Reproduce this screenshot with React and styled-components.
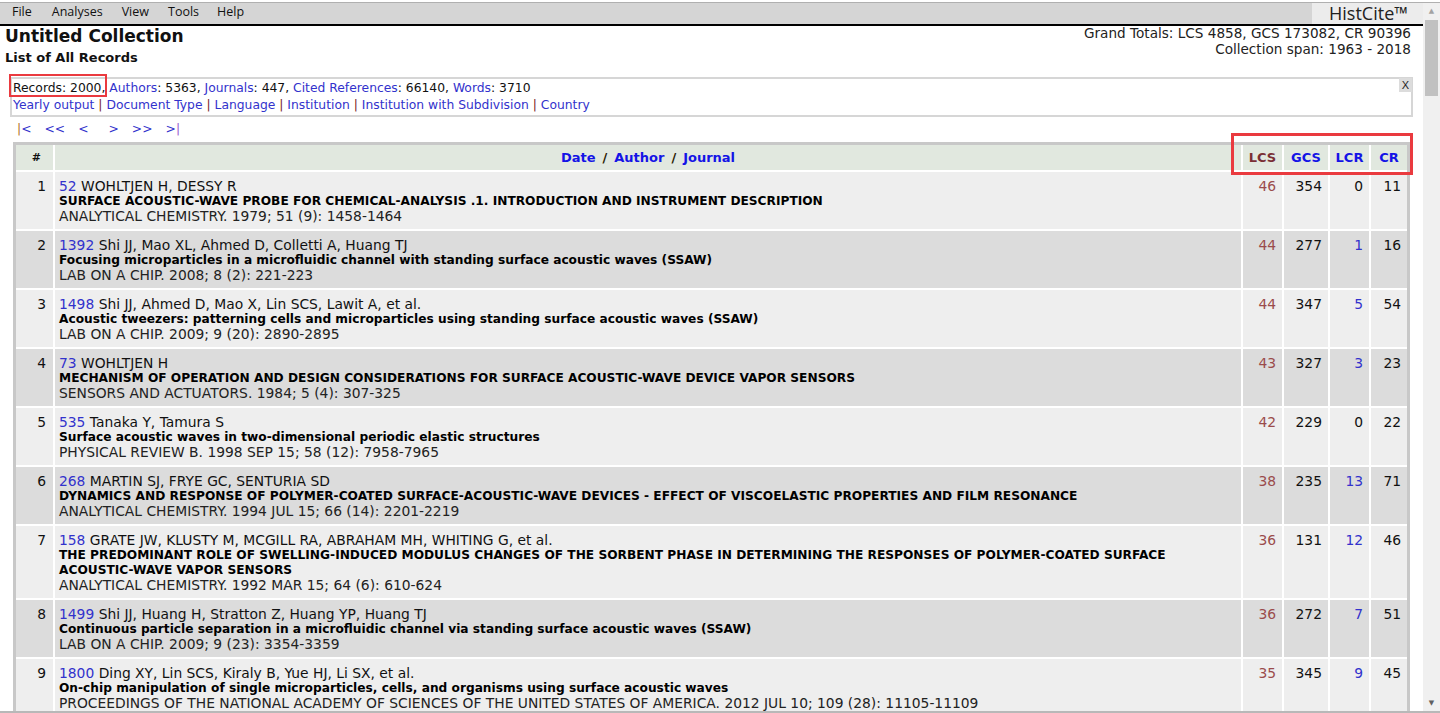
import React from "react";
import styled, { createGlobalStyle } from "styled-components";

const Global = createGlobalStyle`
  html, body { margin: 0; padding: 0; background: #fff; overflow: hidden; }
  body { font-family: "DejaVu Sans", Verdana, sans-serif; font-size: 12.33px; color: #111; }
  * { box-sizing: border-box; }
`;

const LINK = "#3232cc";
const LCSC = "#9a4b4b";

const Window = styled.div`
  display: flex;
  width: 1440px;
  height: 713px;
  padding-top: 2px;
  overflow: hidden;
  border-bottom: 2px solid #b8b8b8;
`;

const Main = styled.div`
  flex: 1;
  min-width: 0;
  display: flex;
  flex-direction: column;
  border-top: 1px solid #b0b0b0;
  overflow: hidden;
`;

const ScrollBar = styled.div`
  width: 17px;
  flex: none;
  background: #f0f0f0;
  border-top: 1px solid #b0b0b0;
  display: flex;
  flex-direction: column;
  align-items: center;
`;

const Arrow = styled.div`
  height: 16px;
  width: 17px;
  display: flex;
  align-items: center;
  justify-content: center;
  color: ${(p) => (p.$down ? "#606060" : "#a3a3a3")};
  font-size: 7px;
`;

const Thumb = styled.div`
  width: 13px;
  height: 76px;
  background: #c1c1c1;
  margin-top: 1px;
`;

const Spacer = styled.div`
  flex: 1;
`;

const MenuBar = styled.div`
  height: 23px;
  background: #d5d5d5;
  border-bottom: 2px solid #000;
  display: flex;
  align-items: stretch;
  font-family: "Open Sans", "Noto Sans", sans-serif;
  font-size: 12.5px;
  color: #111;
`;

const MenuItems = styled.div`
  display: flex;
  align-items: center;
  padding-left: 12px;
  flex: 1;
  padding-bottom: 4px;
`;

const MenuItem = styled.span`
  margin-right: ${(p) => p.$mr}px;
`;

const Brand = styled.div`
  width: 111px;
  background: #ececec;
  display: flex;
  align-items: center;
  justify-content: flex-end;
  padding-right: 15px;
  font-family: "Open Sans", "Noto Sans", sans-serif;
  font-size: 18px;
  color: #222;
  padding-bottom: 1px;
`;

const Header = styled.div`
  display: flex;
  justify-content: space-between;
  padding: 0 12px 0 5px;
`;

const TitleBlock = styled.div`
  display: flex;
  flex-direction: column;
`;

const Title = styled.div`
  font-weight: bold;
  font-size: 17px;
  line-height: 20px;
`;

const SubTitle = styled.div`
  font-weight: bold;
  font-size: 13px;
  line-height: 16px;
  margin-top: 4px;
`;

const Totals = styled.div`
  text-align: right;
  line-height: 16px;
  margin-top: -1px;
  font-size: 13.6px;
  color: #222;
`;

const Rule = styled.div`
  height: 2px;
  background: #000;
  margin: 4px 8px 0 0;
`;

const InfoBox = styled.div`
  position: relative;
  margin: 7px 10px 0 10px;
  border: 2px solid #d6d6d6;
  padding: 1px 2px 1px 1px;
  line-height: 17px;
`;

const Close = styled.div`
  position: absolute;
  top: -1px;
  right: -1px;
  width: 13px;
  height: 14px;
  background: #dcdcdc;
  font-size: 11px;
  line-height: 14px;
  text-align: center;
  color: #222;
  font-family: "Liberation Sans", Arial, sans-serif;
`;

const Link = styled.span`
  color: ${LINK};
`;

const Pipe = styled.span`
  color: #7a1a2a;
`;

const Marked = styled.span`
  position: relative;
  &::after {
    content: "";
    position: absolute;
    left: -4px;
    right: -2px;
    top: -7px;
    bottom: -2px;
    border: 2px solid #ea3a3f;
  }
`;

const Pager = styled.div`
  display: flex;
  gap: 13px;
  padding-left: 17px;
  margin-top: 4px;
  line-height: 16px;
  color: ${LINK};
`;

const PagerLink = styled.span`
  margin-left: ${(p) => p.$ml || 0}px;
`;

const Bar = styled.span`
  color: ${(p) => p.$c};
`;

const Table = styled.div`
  margin: 5px 13px 0 13px;
  border: 3px solid #c8c8c8;
  border-bottom: none;
  background: #fff;
  display: flex;
  flex-direction: column;
  gap: 2px;
`;

const Row = styled.div`
  position: relative;
  display: grid;
  grid-template-columns: 37px 1fr 39px 44px 39px 36px;
  gap: 2px;
`;

const HeadRow = styled(Row)`
  z-index: 2;
`;

const HeadCell = styled.div`
  background: #e1e8df;
  height: 25px;
  display: flex;
  align-items: center;
  justify-content: ${(p) => (p.$right ? "flex-end" : "center")};
  padding-right: ${(p) => (p.$right ? "12px" : "0")};
  font-weight: bold;
  color: ${(p) => p.$color || "#1414e6"};
  font-size: ${(p) => (p.$small ? "11px" : "13px")};
`;

const Slash = styled.span`
  color: #2a1a00;
  margin: 0 7px;
`;

const Cell = styled.div`
  background: ${(p) => (p.$alt ? "#dcdcdc" : "#eeeeee")};
  padding: 7px 4px 5px 4px;
  font-size: 13.85px;
  line-height: 15px;
  text-align: ${(p) => (p.$num ? "right" : "left")};
  color: ${(p) => p.$color || "#111"};
  padding-right: ${(p) => (p.$idx ? "7px" : p.$num ? "6px" : "4px")};
`;

const RecTitle = styled.div`
  font-weight: bold;
  font-size: 12.2px;
  color: #000;
`;

const Source = styled.div`
  color: #222;
`;

const RedFrame = styled.div`
  position: absolute;
  top: -12px;
  right: -6px;
  width: 182px;
  height: 42px;
  border: 3px solid #ea3a3f;
  pointer-events: none;
`;

const records = [
  ["52", "WOHLTJEN H, DESSY R", "SURFACE ACOUSTIC-WAVE PROBE FOR CHEMICAL-ANALYSIS .1. INTRODUCTION AND INSTRUMENT DESCRIPTION", "ANALYTICAL CHEMISTRY. 1979; 51 (9): 1458-1464", 46, 354, 0, 11],
  ["1392", "Shi JJ, Mao XL, Ahmed D, Colletti A, Huang TJ", "Focusing microparticles in a microfluidic channel with standing surface acoustic waves (SSAW)", "LAB ON A CHIP. 2008; 8 (2): 221-223", 44, 277, 1, 16],
  ["1498", "Shi JJ, Ahmed D, Mao X, Lin SCS, Lawit A, et al.", "Acoustic tweezers: patterning cells and microparticles using standing surface acoustic waves (SSAW)", "LAB ON A CHIP. 2009; 9 (20): 2890-2895", 44, 347, 5, 54],
  ["73", "WOHLTJEN H", "MECHANISM OF OPERATION AND DESIGN CONSIDERATIONS FOR SURFACE ACOUSTIC-WAVE DEVICE VAPOR SENSORS", "SENSORS AND ACTUATORS. 1984; 5 (4): 307-325", 43, 327, 3, 23],
  ["535", "Tanaka Y, Tamura S", "Surface acoustic waves in two-dimensional periodic elastic structures", "PHYSICAL REVIEW B. 1998 SEP 15; 58 (12): 7958-7965", 42, 229, 0, 22],
  ["268", "MARTIN SJ, FRYE GC, SENTURIA SD", "DYNAMICS AND RESPONSE OF POLYMER-COATED SURFACE-ACOUSTIC-WAVE DEVICES - EFFECT OF VISCOELASTIC PROPERTIES AND FILM RESONANCE", "ANALYTICAL CHEMISTRY. 1994 JUL 15; 66 (14): 2201-2219", 38, 235, 13, 71],
  ["158", "GRATE JW, KLUSTY M, MCGILL RA, ABRAHAM MH, WHITING G, et al.", "THE PREDOMINANT ROLE OF SWELLING-INDUCED MODULUS CHANGES OF THE SORBENT PHASE IN DETERMINING THE RESPONSES OF POLYMER-COATED SURFACE ACOUSTIC-WAVE VAPOR SENSORS", "ANALYTICAL CHEMISTRY. 1992 MAR 15; 64 (6): 610-624", 36, 131, 12, 46],
  ["1499", "Shi JJ, Huang H, Stratton Z, Huang YP, Huang TJ", "Continuous particle separation in a microfluidic channel via standing surface acoustic waves (SSAW)", "LAB ON A CHIP. 2009; 9 (23): 3354-3359", 36, 272, 7, 51],
  ["1800", "Ding XY, Lin SCS, Kiraly B, Yue HJ, Li SX, et al.", "On-chip manipulation of single microparticles, cells, and organisms using surface acoustic waves", "PROCEEDINGS OF THE NATIONAL ACADEMY OF SCIENCES OF THE UNITED STATES OF AMERICA. 2012 JUL 10; 109 (28): 11105-11109", 35, 345, 9, 45],
];

const menu = [
  ["File", 20],
  ["Analyses", 19],
  ["View", 19],
  ["Tools", 18],
  ["Help", 0],
];

export default function App() {
  return (
    <>
      <Global />
      <Window>
        <Main>
          <MenuBar>
            <MenuItems>
              {menu.map(([m, mr]) => (
                <MenuItem key={m} $mr={mr}>{m}</MenuItem>
              ))}
            </MenuItems>
            <Brand>HistCite™</Brand>
          </MenuBar>
          <Header>
            <TitleBlock>
              <Title>Untitled Collection</Title>
              <SubTitle>List of All Records</SubTitle>
            </TitleBlock>
            <Totals>
              <div>Grand Totals: LCS 4858, GCS 173082, CR 90396</div>
              <div>Collection span: 1963 - 2018</div>
            </Totals>
          </Header>
          <Rule />
          <InfoBox>
            <div>
              <Marked>Records: 2000,</Marked> <Link>Authors</Link>: 5363, <Link>Journals</Link>: 447,{" "}
              <Link>Cited References</Link>: 66140, <Link>Words</Link>: 3710
            </div>
            <div>
              <Link>Yearly output</Link> <Pipe>|</Pipe> <Link>Document Type</Link> <Pipe>|</Pipe>{" "}
              <Link>Language</Link> <Pipe>|</Pipe> <Link>Institution</Link> <Pipe>|</Pipe>{" "}
              <Link>Institution with Subdivision</Link> <Pipe>|</Pipe> <Link>Country</Link>
            </div>
            <Close>X</Close>
          </InfoBox>
          <Pager>
            <PagerLink><Bar $c="#b0702a">|</Bar>&lt;</PagerLink>
            <PagerLink>&lt;&lt;</PagerLink>
            <PagerLink>&lt;</PagerLink>
            <PagerLink $ml={7}>&gt;</PagerLink>
            <PagerLink>&gt;&gt;</PagerLink>
            <PagerLink>&gt;<Bar $c="#9a5ad0">|</Bar></PagerLink>
          </Pager>
          <Table>
            <HeadRow>
              <HeadCell $right $color="#111" $small>#</HeadCell>
              <HeadCell>
                Date<Slash>/</Slash>Author<Slash>/</Slash>Journal
              </HeadCell>
              <HeadCell $color="#7a2f35">LCS</HeadCell>
              <HeadCell>GCS</HeadCell>
              <HeadCell>LCR</HeadCell>
              <HeadCell>CR</HeadCell>
              <RedFrame />
            </HeadRow>
            {records.map((r, i) => {
              const alt = i % 2 === 1;
              return (
                <Row key={i}>
                  <Cell $alt={alt} $num $idx>{i + 1}</Cell>
                  <Cell $alt={alt}>
                    <div>
                      <Link>{r[0]}</Link> {r[1]}
                    </div>
                    <RecTitle>{r[2]}</RecTitle>
                    <Source>{r[3]}</Source>
                  </Cell>
                  <Cell $alt={alt} $num $color={LCSC}>{r[4]}</Cell>
                  <Cell $alt={alt} $num>{r[5]}</Cell>
                  <Cell $alt={alt} $num $color={r[6] ? LINK : "#111"}>{r[6]}</Cell>
                  <Cell $alt={alt} $num>{r[7]}</Cell>
                </Row>
              );
            })}
          </Table>
        </Main>
        <ScrollBar>
          <Arrow>▲</Arrow>
          <Thumb />
          <Spacer />
          <Arrow $down>▼</Arrow>
        </ScrollBar>
      </Window>
    </>
  );
}
